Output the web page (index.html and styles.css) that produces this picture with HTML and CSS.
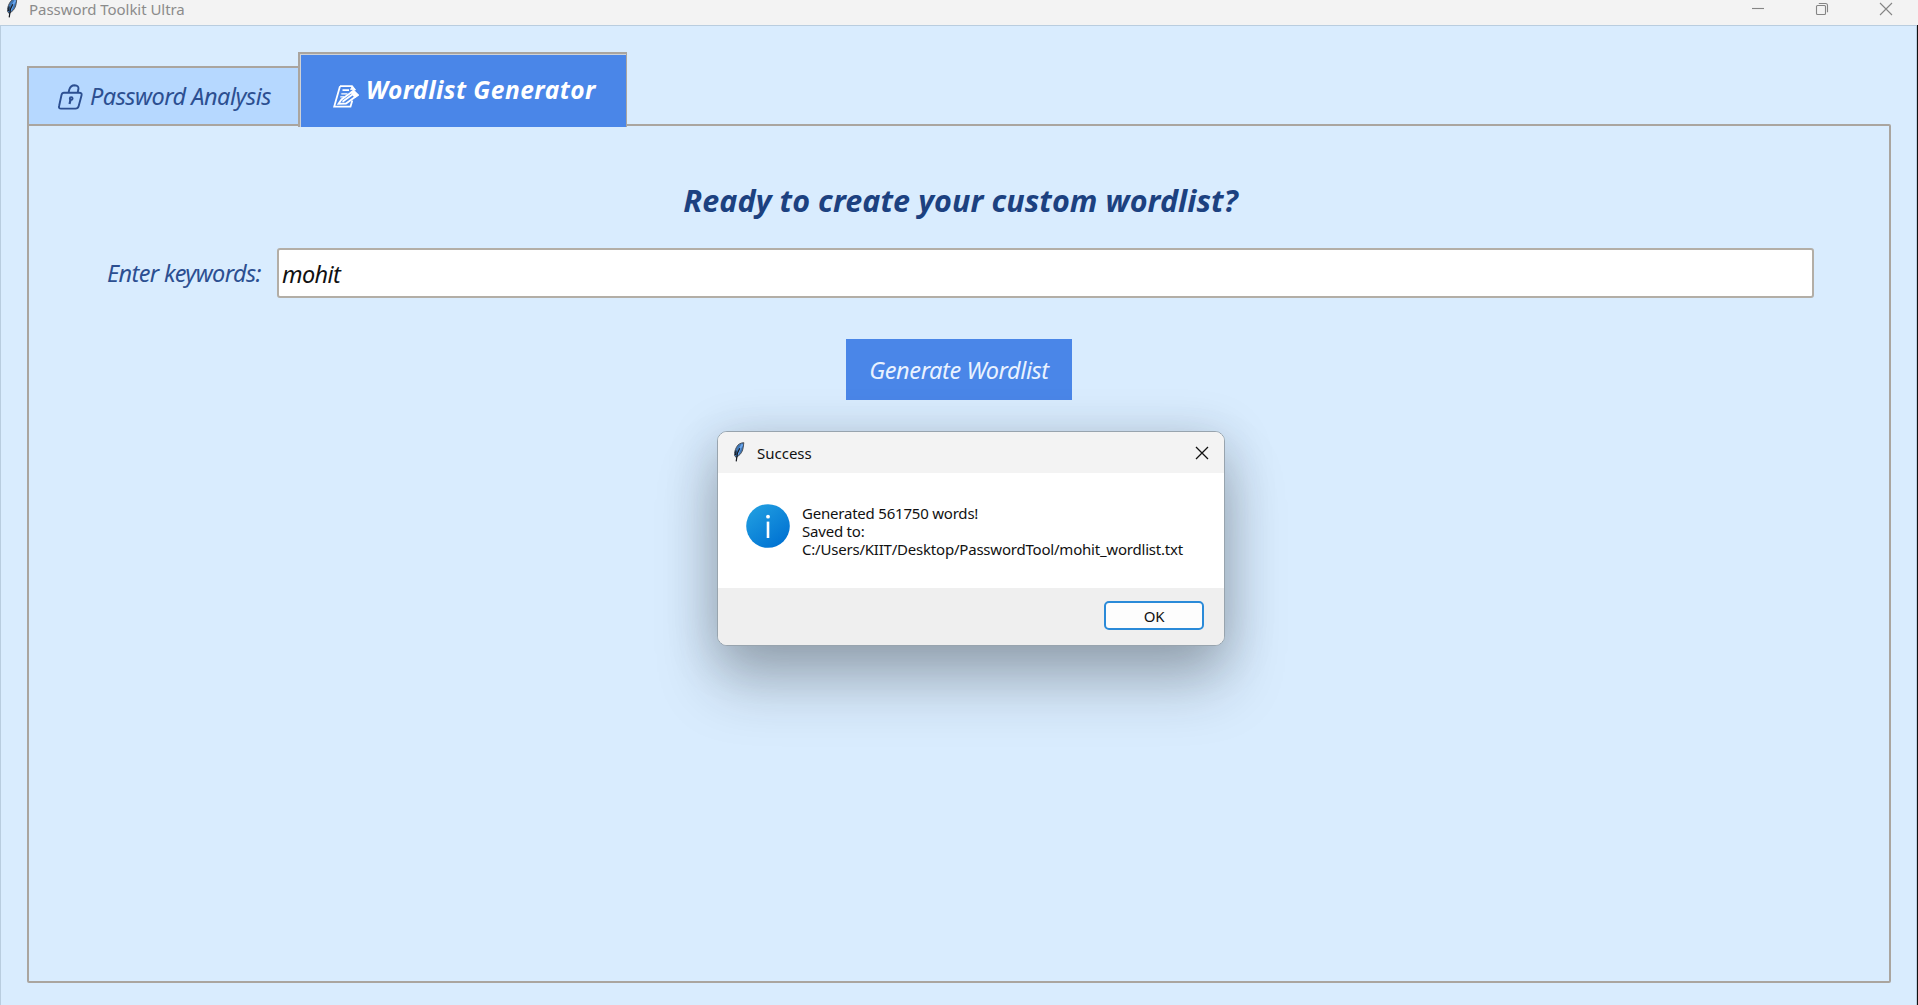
FILE: index.html
```html
<!DOCTYPE html>
<html lang="en">
<head>
<meta charset="utf-8">
<title>Password Toolkit Ultra</title>
<link rel="stylesheet" href="styles.css">
</head>
<body>
<svg class="defs" width="0" height="0" aria-hidden="true">
  <defs>
    <linearGradient id="infoFill" x1="0.15" y1="0.1" x2="0.8" y2="0.95">
      <stop offset="0" stop-color="#1f9ce0"/><stop offset="1" stop-color="#0072d2"/>
    </linearGradient>
    <symbol id="feather" viewBox="0 0 12 20">
      <path d="M10.800.7C7.800.9 5 2 3.500 5.200 2 8 1.200 11 1.600 13.500L3.300 15.700 5.200 14C8.200 12 9.600 9 10.200 5.500Z" fill="#3f78b8" stroke="#4a4f57" stroke-width="1"/>
      <path d="M9.500 2.300 6.800 7 4.800 12.500" fill="none" stroke="#6aa6ee" stroke-width="1.800"/>
      <path d="M6.800 6.200 4.500 11 3.200 19.400M3 8.500 2.600 13" fill="none" stroke="#15191f" stroke-width="1.200"/>
    </symbol>
  </defs>
</svg>
<div class="window">
  <header class="titlebar">
    <svg class="titlebar-icon"><use href="#feather"/></svg>
    <span class="titlebar-text">Password Toolkit Ultra</span>
    <div class="controls">
      <svg viewBox="0 0 14 14"><path d="M1 6.500h12"/></svg>
      <svg viewBox="0 0 14 14"><rect x="1.500" y="3.500" width="9" height="9" rx="1"/><path d="M3.800 1.500H10.500Q12.500 1.500 12.500 3.500V10.200"/></svg>
      <svg viewBox="0 0 14 14"><path d="M1 1 13 13M13 1 1 13"/></svg>
    </div>
  </header>
  <main class="client">
    <nav class="tabs">
      <div class="tab">
        <svg class="lock" viewBox="0 0 26 27"><path d="M6 8.800H21.200Q24.200 8.800 23.500 11.500L20.700 22Q20 24.600 17.500 24.600H3Q.4 24.600 1.100 22L3.500 11Q4 8.800 6 8.800ZM10.500 8.800 11.300 5.500Q12.700 1.200 16.500 1.200 21 1.400 20.400 5.300L19.600 8.800"/><path d="M12.700 15 11.500 20" stroke-width="2.200"/><circle cx="13.200" cy="14.500" r="1.400"/></svg>
        <span>Password Analysis</span>
      </div>
      <div class="tab active">
        <svg class="memo" viewBox="0 0 26 24"><path d="M7 2.200H19L22 6M7 2.200 1.200 22.600H17.500L19.300 16.500M9.500 6.200H16"/><path d="M8.300 9.800H14.500M7.300 12.800H11" stroke-width="1.200"/><path d="M17.500 5.500 19 2.500 22.500 6Z" fill="#fff" stroke-width=".8"/><path d="M5.500 19.800 8.500 15.500 20.500 6.800 24.800 11 13 19.500Z"/><path d="M18.500 8.200 20.500 6.800 24.800 11 22 13Z" fill="#fff"/><path d="M9.500 17.800 21.500 9"/></svg>
        <span>Wordlist Generator</span>
      </div>
    </nav>
    <section class="panel">
      <h1 class="heading"><span>Ready to create your custom wordlist?</span></h1>
      <div class="field">
        <label for="keywords"><span>Enter keywords:</span></label>
        <div class="entry" id="keywords"><span>mohit</span></div>
      </div>
      <div class="generate"><span>Generate Wordlist</span></div>
    </section>
  </main>
</div>
<div class="dialog">
  <div class="dialog-title">
    <svg class="dialog-icon"><use href="#feather"/></svg>
    <span>Success</span>
    <svg class="dialog-close" viewBox="0 0 14 14"><path d="M1 1 13 13M13 1 1 13"/></svg>
  </div>
  <div class="dialog-body">
    <svg class="info" viewBox="0 0 44 44"><circle cx="22" cy="22" r="21.800" fill="url(#infoFill)"/><circle cx="22" cy="12.700" r="1.900" fill="#fff"/><path d="M22 17.600V34" stroke="#fff" stroke-width="2.600"/></svg>
    <div class="message"><div><span>Generated 561750 words!</span></div><div><span>Saved to:</span></div><div><span>C:/Users/KIIT/Desktop/PasswordTool/mohit_wordlist.txt</span></div></div>
  </div>
  <div class="dialog-foot"><div class="ok"><span>OK</span></div></div>
</div>
</body>
</html>
```
FILE: styles.css
```css
* { box-sizing: border-box; }
body {
  margin: 0;
  width: 1918px;
  height: 1005px;
  overflow: hidden;
  background: #d9ecfe;
  font-family: "Noto Sans", "Open Sans", sans-serif;
}
.defs { position: absolute; }
svg { display: block; flex: none; }
span { white-space: nowrap; }
.window { height: 1005px; display: flex; flex-direction: column; background: #111; }
.titlebar {
  height: 25px;
  display: flex;
  background: #f3f3f3;
  color: #8b8b8b;
  padding-left: 6px;
}
.titlebar-icon { width: 12px; height: 20px; margin-top: -2px; }
.titlebar-text { margin-left: 11px; font-size: 15px; line-height: 18px; letter-spacing: -0.05px; }
.controls { margin-left: auto; display: flex; gap: 50px; padding: 2px 25px 0 0; }
.controls svg, .dialog-close { width: 14px; height: 14px; fill: none; stroke: #858585; stroke-width: 1.1; }
.client {
  flex: 1;
  display: flex;
  flex-direction: column;
  margin-right: 1px;
  border: solid #b9cddf;
  border-width: 1px 1px 0 1px;
  background: #d9ecfe;
  padding: 26px 25px 22px 26px;
}
.tabs { display: flex; align-items: flex-end; height: 75px; margin-bottom: -3px; position: relative; z-index: 1; }
.tab {
  width: 272px;
  height: 60px;
  margin-bottom: 1px;
  padding: 16px 0 0 29px;
  display: flex;
  border: 2px solid #aaa59f;
  border-right-width: 1px;
  background: #b6d8ff;
  color: #2c4f91;
  font-size: 23.5px;
  font-style: italic;
  line-height: 30px;
  letter-spacing: -0.5px;
}
.lock { width: 26px; height: 27px; fill: none; stroke: #2c4f91; stroke-width: 1.9; }
.tab span { margin: -3px 0 0 6px; }
.tab.active {
  width: 329px;
  height: 75px;
  margin: 0 0 0 -1px;
  padding: 20px 0 0 33px;
  border: solid #aaa59f;
  border-width: 2px 1px 0 2px;
  background: #4a86e8;
  box-shadow: inset 1px 1px #cfd2d6;
  color: #fff;
  font-size: 24.5px;
  font-weight: bold;
  letter-spacing: 0.5px;
}
.tab.active span { margin: 1px 0 0 7px; }
.memo { width: 26px; height: 24px; margin-top: 10px; fill: none; stroke: #fff; stroke-width: 1.8; }
.panel {
  flex: 1;
  border: 2px solid #aaa59f;
  border-radius: 2px;
  display: flex;
  flex-direction: column;
  padding: 53px 75px 0 78px;
}
.heading { margin: 0; height: 42px; text-align: center; font-size: 30.5px; line-height: 42px; letter-spacing: 0.08px; font-style: italic; color: #1c4180; }
.field { display: flex; margin-top: 27px; height: 50px; font-size: 23.5px; line-height: 48px; letter-spacing: -0.6px; font-style: italic; }
.field label { width: 170px; padding-top: 1px; color: #2c4f91; }
.entry { flex: 1; border: 2px solid #b3aea6; border-radius: 3px; background: #fff; padding-left: 3px; color: #111; }
.generate {
  width: 226px;
  height: 61px;
  margin: 41px 0 0 739px;
  background: #4a86e8;
  color: #e9f2ff;
  text-align: center;
  font-size: 23.5px;
  line-height: 62px;
  letter-spacing: -0.4px;
  font-style: italic;
}
.dialog {
  position: absolute;
  left: 717px;
  top: 431px;
  width: 508px;
  height: 215px;
  border: 1px solid #98a4ae;
  border-radius: 10px;
  overflow: hidden;
  background: #fff;
  box-shadow: 0 38px 60px rgba(30, 35, 40, .26), 0 8px 50px rgba(30, 40, 50, .22);
  display: flex;
  flex-direction: column;
  color: #111;
}
.dialog-title { height: 41px; display: flex; background: #f3f3f3; padding: 10px 15px; font-size: 15px; line-height: 22px; }
.dialog-icon { width: 12px; height: 20px; margin-right: 12px; }
.dialog-close { margin: 4px 0 0 auto; stroke: #111; stroke-width: 1.3; }
.dialog-body { flex: 1; display: flex; padding: 31px 0 0 28px; }
.info { width: 44px; height: 44px; }
.message { margin: 0 0 0 12px; font-size: 15px; line-height: 18px; letter-spacing: -0.21px; }
.dialog-foot { height: 57px; background: #efefef; padding: 13px 20px 0 0; }
.ok { margin-left: auto; width: 100px; height: 29px; border: 2px solid #2a8ad8; border-radius: 5px; background: #fdfdfd; text-align: center; font-size: 15px; line-height: 26px; letter-spacing: -0.3px; }
```
